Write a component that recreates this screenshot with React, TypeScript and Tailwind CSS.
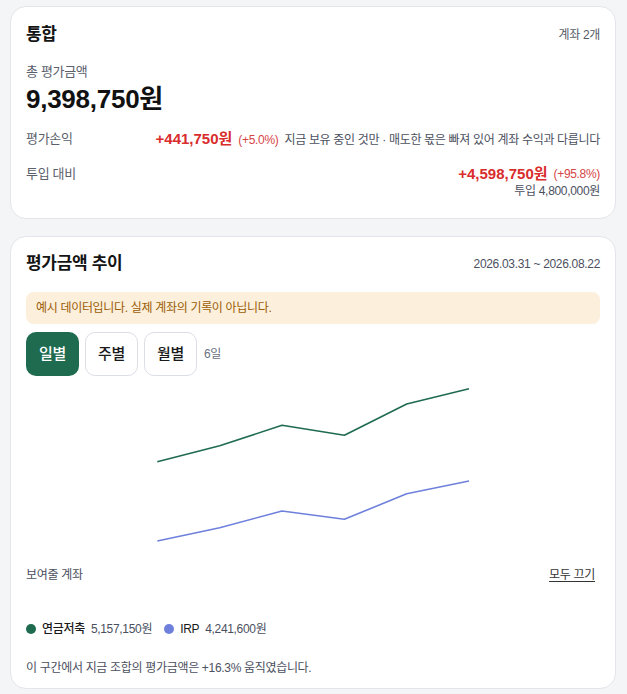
import React from "react";

const font = { fontFamily: '"Liberation Sans", "Noto Sans CJK KR", sans-serif' };

const xs = [131.3, 193.7, 256, 318.4, 380.7, 443];
const green = [76.7, 60.7, 40.3, 50.3, 19, 3.7];
const blue = [156, 142.7, 126, 134.3, 108.7, 96];
const pts = (ys: number[]) => ys.map((y, i) => `${xs[i]},${y}`).join(" ");

export default function App() {
  return (
    <div className="min-h-[694px] bg-[#f4f5f7] pl-[10px] pr-[11px] pt-[6px] pb-[5px] tracking-[-0.02em] text-[#1a1a1a]" style={font}>
      <div className="rounded-[16px] border border-[#e3e5ea] bg-white px-[15px] pt-[16px] pb-[19px]">
        <div className="flex h-6 items-center justify-between">
          <span className="text-[17px] font-bold text-[#141414]">통합</span>
          <span className="text-[12px] text-[#555b66]">계좌 2개</span>
        </div>
        <div className="mt-4 text-[13px] leading-[18px] text-[#5b606b]">총 평가금액</div>
        <div className="mt-[2px] text-[26px] font-bold leading-8 tracking-[-0.01em] text-[#111]">9,398,750원</div>
        <div className="mt-[14px] flex h-5 items-center justify-between">
          <span className="text-[13px] text-[#5b606b]">평가손익</span>
          <span className="flex items-baseline">
            <span className="text-[15px] font-bold tracking-normal text-[#d92c2c]">+441,750원</span>
            <span className="ml-[6px] text-[12px] text-[#d64545]">(+5.0%)</span>
            <span className="ml-[6px] text-[12px] text-[#4b5060]">지금 보유 중인 것만 · 매도한 몫은 빠져 있어 계좌 수익과 다릅니다</span>
          </span>
        </div>
        <div className="mt-[15px] flex justify-between">
          <span className="h-5 text-[13px] leading-5 text-[#5b606b]">투입 대비</span>
          <div className="flex flex-col items-end">
            <span className="flex h-5 items-center">
              <span className="text-[15px] font-bold tracking-normal text-[#d92c2c]">+4,598,750원</span>
              <span className="ml-[6px] text-[12px] text-[#d64545]">(+95.8%)</span>
            </span>
            <span className="text-[12px] leading-[15px] text-[#4b5060]">투입 4,800,000원</span>
          </div>
        </div>
      </div>

      <div className="mt-[17px] rounded-[16px] border border-[#e3e5ea] bg-white px-[15px] pt-[15px] pb-[11px]">
        <div className="flex h-6 items-center justify-between">
          <span className="text-[17px] font-bold text-[#141414]">평가금액 추이</span>
          <span className="text-[12px] text-[#4b5060]">2026.03.31 ~ 2026.08.22</span>
        </div>
        <div className="mt-4 flex h-8 items-center rounded-[8px] bg-[#fcefdb] px-[10px] text-[12px] text-[#9a5d05]">
          예시 데이터입니다. 실제 계좌의 기록이 아닙니다.
        </div>
        <div className="mt-2 flex items-center gap-[6px]">
          <button className="h-11 w-[53px] rounded-[10px] bg-[#1f6b4f] text-[15px] font-medium text-white">일별</button>
          <button className="h-11 w-[53px] rounded-[10px] border border-[#dcdee6] bg-white text-[15px] font-medium text-[#1a1a1a]">주별</button>
          <button className="h-11 w-[53px] rounded-[10px] border border-[#dcdee6] bg-white text-[15px] font-medium text-[#1a1a1a]">월별</button>
          <span className="ml-[1px] text-[12px] text-[#6b7080]">6일</span>
        </div>
        <svg className="mt-[9px] block w-full" viewBox="0 0 574 170" height={170}>
          <polyline points={pts(green)} fill="none" stroke="#1f6b4f" strokeWidth={1.6} strokeLinejoin="round" />
          <polyline points={pts(blue)} fill="none" stroke="#6e80dc" strokeWidth={1.6} strokeLinejoin="round" />
        </svg>
        <div className="mt-[11px] flex h-[18px] items-center justify-between text-[12px]">
          <span className="text-[#4b5060]">보여줄 계좌</span>
          <button className="mr-[5px] text-[#333] underline underline-offset-2">모두 끄기</button>
        </div>
        <div className="mt-[36px] flex h-[18px] items-center text-[12px]">
          <span className="h-[10px] w-[10px] rounded-full bg-[#1f6b4f]" />
          <span className="ml-[6px] font-medium text-[#1a1a1a]">연금저축</span>
          <span className="ml-[6px] text-[#4b5060]">5,157,150원</span>
          <span className="ml-3 h-[10px] w-[10px] rounded-full bg-[#6e80dc]" />
          <span className="ml-[6px] font-medium text-[#1a1a1a]">IRP</span>
          <span className="ml-[6px] text-[#4b5060]">4,241,600원</span>
        </div>
        <div className="mt-[21px] text-[12px] leading-[18px] text-[#4b5060]">
          이 구간에서 지금 조합의 평가금액은 +16.3% 움직였습니다.
        </div>
      </div>
    </div>
  );
}
